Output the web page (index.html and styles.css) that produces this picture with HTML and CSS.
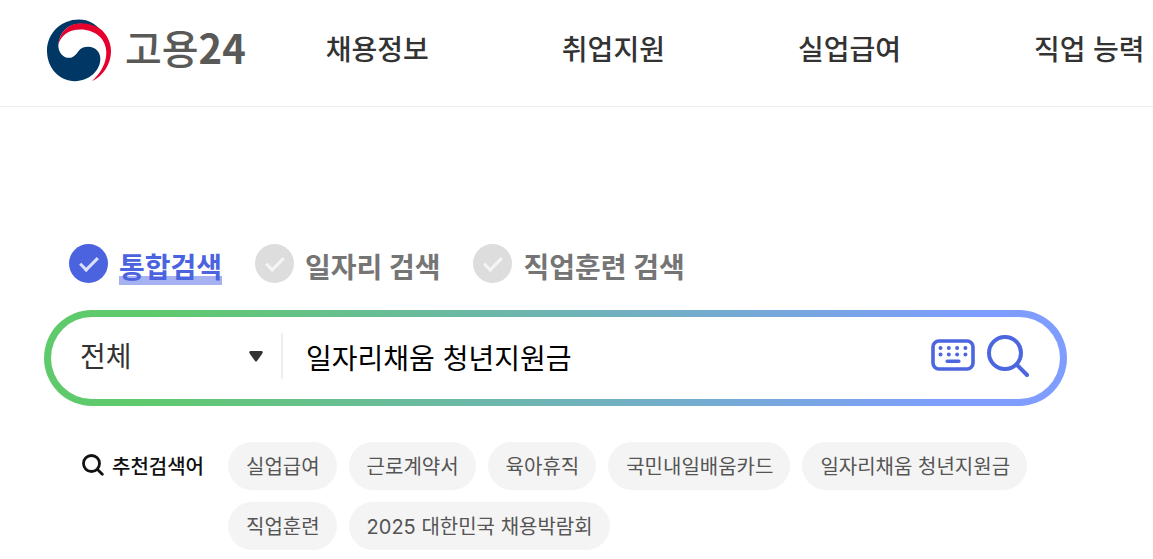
FILE: index.html
```html
<!DOCTYPE html>
<html lang="ko">
<head>
<meta charset="utf-8">
<meta name="viewport" content="width=device-width, initial-scale=1">
<title>고용24</title>
<link rel="stylesheet" href="styles.css">
</head>
<body>
<header class="header">
  <a class="logo" href="#">
    <svg class="logo-mark" viewBox="0 0 192 188" aria-hidden="true">
      <path fill="#003764" d="M160 119C160 98 145 83 124 83C110 83 101 87 94 96C86 108 78 116 66 116C48 116 34 100 34 78C38 38 62 14 100 14C125 14 150 22 168 42C150 15 125 1 96 1C42 1 0 42 0 95C0 146 36 186 84 186C126 186 160 155 160 119Z"/>
      <path fill="#e6002d" d="M34 76C38 38 64 12 102 12C130 12 152 22 165 33C182 50 192 72 192 96C192 135 168 170 135 186C163 160 178 130 178 100C178 60 145 31 100 31C66 31 42 48 34 76Z"/>
    </svg>
    <span class="logo-text">고용<b>24</b></span>
  </a>
  <nav class="nav">
    <a href="#">채용정보</a>
    <a href="#">취업지원</a>
    <a href="#">실업급여</a>
    <a href="#">직업 능력</a>
  </nav>
</header>
<main class="main">
  <form class="search">
    <div class="scopes">
      <label class="scope"><input type="radio" name="scope" checked><span>통합검색</span></label>
      <label class="scope"><input type="radio" name="scope"><span>일자리 검색</span></label>
      <label class="scope"><input type="radio" name="scope"><span>직업훈련 검색</span></label>
    </div>
    <div class="bar">
      <div class="category">
        <select class="category-select" aria-label="검색 분류"><option>전체</option></select>
        <svg class="category-arrow" viewBox="0 0 14 11" aria-hidden="true"><path fill="#333" d="M2 0H12Q15 0 13 3L8 10Q7 11 6 10L1 3Q-1 0 2 0Z"/></svg>
      </div>
      <input class="query" type="text" aria-label="검색어" value="일자리채움 청년지원금">
      <button class="icon-button" type="button" aria-label="가상 키보드">
        <svg class="keyboard" viewBox="0 0 44 32" aria-hidden="true">
          <rect x="2" y="2" width="40" height="28" rx="6" fill="none" stroke="#4b66df" stroke-width="3.600"/>
          <g fill="#4b66df"><circle cx="9.500" cy="9" r="2"/><circle cx="17.800" cy="9" r="2"/><circle cx="26.100" cy="9" r="2"/><circle cx="34.400" cy="9" r="2"/><circle cx="9.500" cy="15.600" r="2"/><circle cx="17.800" cy="15.600" r="2"/><circle cx="26.100" cy="15.600" r="2"/><circle cx="34.400" cy="15.600" r="2"/><rect x="14.500" y="20.500" width="15" height="3.400" rx="1.700"/></g>
        </svg>
      </button>
      <button class="icon-button" type="submit" aria-label="검색">
        <svg class="magnifier" viewBox="0 0 44 44" aria-hidden="true"><g fill="none" stroke="#4b66df" stroke-width="4" stroke-linecap="round"><circle cx="19" cy="19" r="16"/><path d="M31 31L41 41"/></g></svg>
      </button>
    </div>
  </form>
  <section class="suggest">
    <h2 class="suggest-title">
      <svg class="suggest-icon" viewBox="0 0 22 22" aria-hidden="true"><g fill="none" stroke="#111" stroke-width="2.800" stroke-linecap="round"><circle cx="9.500" cy="9.500" r="8"/><path d="M15.500 15.500L20.300 20.300"/></g></svg>
      추천검색어
    </h2>
    <div class="chips">
      <a href="#">실업급여</a>
      <a href="#">근로계약서</a>
      <a href="#">육아휴직</a>
      <a href="#">국민내일배움카드</a>
      <a href="#">일자리채움 청년지원금</a>
      <a href="#">직업훈련</a>
      <a href="#">2025 대한민국 채용박람회</a>
    </div>
  </section>
</main>
</body>
</html>
```
FILE: styles.css
```css
* {
  box-sizing: border-box;
}

body {
  margin: 0;
  overflow-x: hidden;
  background: #fff;
  color: #333;
  font-family: Inter, "Noto Sans CJK KR", sans-serif;
}

a {
  color: inherit;
  text-decoration: none;
}

.header {
  display: flex;
  align-items: center;
  gap: 80px;
  padding: 15px 0 21px 47px;
  border-bottom: 1px solid #eee;
  white-space: nowrap;
}

.logo {
  display: flex;
  align-items: center;
  gap: 14px;
  flex: none;
}

.logo-mark {
  width: 64px;
  height: 63px;
}

.logo-text {
  margin-bottom: 6px;
  color: #595957;
  font-family: "Noto Sans CJK KR", sans-serif;
  font-size: 40px;
  font-weight: 500;
  line-height: 64px;
}

.logo-text b {
  font-weight: 700;
}

.nav {
  display: flex;
  gap: 133px;
  font-size: 28px;
  font-weight: 500;
  line-height: 40px;
}

.main {
  padding: 134px 86px 9px 44px;
}

.scopes {
  display: flex;
  flex-wrap: wrap;
  gap: 12px 33px;
  padding-left: 25px;
}

.scope {
  display: flex;
  gap: 11px;
  color: #757575;
  font-size: 28px;
  font-weight: 700;
  line-height: 34px;
}

.scope span {
  margin-top: 10px;
}

.scope input {
  display: grid;
  place-items: center;
  width: 39px;
  height: 39px;
  margin: 3px 0 0;
  border-radius: 50%;
  background: #ddd;
  appearance: none;
}

.scope input::before {
  width: 15px;
  height: 7px;
  margin-bottom: 4px;
  border: solid #f5f5f5;
  border-width: 0 0 3px 3px;
  content: "";
  rotate: -45deg;
}

.scope input:checked {
  background: #4b63df;
}

.scope input:checked::before {
  border-color: #dbe0fa;
}

.scope input:checked + span {
  background: linear-gradient(#a5b1f0, #a5b1f0) bottom / 100% 9px no-repeat;
  color: #4b63df;
}

.bar {
  display: flex;
  align-items: center;
  margin-top: 25px;
  padding: 15px 30px 19px 29px;
  border: 7px solid transparent;
  border-radius: 48px;
  background:
    linear-gradient(#fff, #fff) padding-box,
    linear-gradient(100deg, #5fca6b 10%, #7e9dff 90%) border-box;
}

.category {
  display: grid;
  align-items: center;
  flex: none;
  width: 203px;
  height: 46px;
  border-right: 2px solid #eee;
}

.category-select,
.category-arrow {
  grid-area: 1 / 1;
}

.category-select {
  width: 100%;
  height: 46px;
  padding: 2px 0 0;
  border: 0;
  background: none;
  color: #333;
  font: 400 28px/40px Inter, "Noto Sans CJK KR", sans-serif;
  appearance: none;
}

.category-arrow {
  justify-self: end;
  width: 14px;
  height: 11px;
  margin-right: 18px;
  pointer-events: none;
}

.query {
  flex: 1;
  min-width: 0;
  height: 48px;
  padding: 2px 22px 0 23px;
  border: 0;
  outline: 0;
  background: none;
  color: #000;
  font: 400 28px/40px Inter, "Noto Sans CJK KR", sans-serif;
}

.icon-button {
  display: flex;
  flex: none;
  margin-left: 11px;
  padding: 0;
  border: 0;
  background: none;
}

.keyboard {
  width: 44px;
  height: 32px;
  margin-bottom: 2px;
}

.magnifier {
  width: 44px;
  height: 44px;
}

.suggest {
  display: flex;
  gap: 24px;
  margin-top: 36px;
  padding-left: 38px;
}

.suggest-title {
  display: flex;
  align-items: center;
  flex: none;
  gap: 8px;
  height: 46px;
  margin: 0;
  color: #111;
  font-size: 20px;
  font-weight: 500;
}

.suggest-icon {
  width: 22px;
  height: 22px;
}

.chips {
  display: flex;
  flex-wrap: wrap;
  gap: 12px;
}

.chips a {
  padding: 2px 17px 0 18px;
  border-radius: 24px;
  background: #f4f4f4;
  color: #555;
  font-size: 20px;
  line-height: 46px;
}
```
